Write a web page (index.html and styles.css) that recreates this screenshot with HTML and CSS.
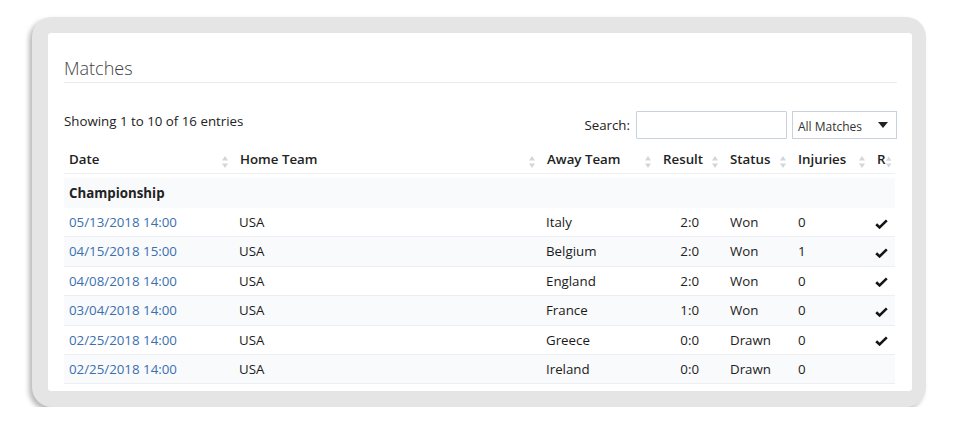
FILE: index.html
```html
<!DOCTYPE html>
<html lang="en">
<head>
<meta charset="utf-8">
<title>Matches</title>
<link rel="stylesheet" href="styles.css">
</head>
<body>
<div class="frame">
  <div class="panel">
    <h2 class="title">Matches</h2>
    <div class="toolbar">
      <div class="info">Showing 1 to 10 of 16 entries</div>
      <div class="filters">
        <label class="search-label" for="q">Search:</label>
        <input id="q" class="search-input" type="text">
        <div class="select">
          <span>All Matches</span>
          <svg class="caret" width="10" height="6" viewBox="0 0 10 6"><path d="M0 0H10L5 6Z" fill="#222"/></svg>
        </div>
      </div>
    </div>
    <table class="grid">
      <colgroup>
        <col class="c-date"><col class="c-home"><col class="c-away"><col class="c-result"><col class="c-status"><col class="c-inj"><col class="c-r">
      </colgroup>
      <thead>
        <tr>
          <th><div class="th"><span>Date</span><svg class="sort" width="6" height="12" viewBox="0 0 6 12"><path d="M3 0L6 4.5H0Z M3 12L6 7.5H0Z" fill="#d3d6da"/></svg></div></th>
          <th><div class="th"><span>Home Team</span><svg class="sort" width="6" height="12" viewBox="0 0 6 12"><path d="M3 0L6 4.5H0Z M3 12L6 7.5H0Z" fill="#d3d6da"/></svg></div></th>
          <th><div class="th"><span>Away Team</span><svg class="sort" width="6" height="12" viewBox="0 0 6 12"><path d="M3 0L6 4.5H0Z M3 12L6 7.5H0Z" fill="#d3d6da"/></svg></div></th>
          <th><div class="th"><span>Result</span><svg class="sort" width="6" height="12" viewBox="0 0 6 12"><path d="M3 0L6 4.5H0Z M3 12L6 7.5H0Z" fill="#d3d6da"/></svg></div></th>
          <th><div class="th"><span>Status</span><svg class="sort" width="6" height="12" viewBox="0 0 6 12"><path d="M3 0L6 4.5H0Z M3 12L6 7.5H0Z" fill="#d3d6da"/></svg></div></th>
          <th><div class="th"><span>Injuries</span><svg class="sort" width="6" height="12" viewBox="0 0 6 12"><path d="M3 0L6 4.5H0Z M3 12L6 7.5H0Z" fill="#d3d6da"/></svg></div></th>
          <th class="th-r"><div class="th"><span>R</span><svg class="sort" width="6" height="12" viewBox="0 0 6 12"><path d="M3 0L6 4.5H0Z M3 12L6 7.5H0Z" fill="#d3d6da"/></svg></div></th>
        </tr>
      </thead>
      <tbody>
        <tr class="group"><td colspan="7">Championship</td></tr>
        <tr>
          <td><a href="#">05/13/2018 14:00</a></td><td class="team">USA</td><td class="team">Italy</td><td class="result">2:0</td><td>Won</td><td>0</td>
          <td class="check"><svg width="13" height="10" viewBox="0 0 13 10"><path d="M1.2 5.2L4.6 8.4L11.8 1.4" fill="none" stroke="#151515" stroke-width="2.6"/></svg></td>
        </tr>
        <tr>
          <td><a href="#">04/15/2018 15:00</a></td><td class="team">USA</td><td class="team">Belgium</td><td class="result">2:0</td><td>Won</td><td>1</td>
          <td class="check"><svg width="13" height="10" viewBox="0 0 13 10"><path d="M1.2 5.2L4.6 8.4L11.8 1.4" fill="none" stroke="#151515" stroke-width="2.6"/></svg></td>
        </tr>
        <tr>
          <td><a href="#">04/08/2018 14:00</a></td><td class="team">USA</td><td class="team">England</td><td class="result">2:0</td><td>Won</td><td>0</td>
          <td class="check"><svg width="13" height="10" viewBox="0 0 13 10"><path d="M1.2 5.2L4.6 8.4L11.8 1.4" fill="none" stroke="#151515" stroke-width="2.6"/></svg></td>
        </tr>
        <tr>
          <td><a href="#">03/04/2018 14:00</a></td><td class="team">USA</td><td class="team">France</td><td class="result">1:0</td><td>Won</td><td>0</td>
          <td class="check"><svg width="13" height="10" viewBox="0 0 13 10"><path d="M1.2 5.2L4.6 8.4L11.8 1.4" fill="none" stroke="#151515" stroke-width="2.6"/></svg></td>
        </tr>
        <tr>
          <td><a href="#">02/25/2018 14:00</a></td><td class="team">USA</td><td class="team">Greece</td><td class="result">0:0</td><td>Drawn</td><td>0</td>
          <td class="check"><svg width="13" height="10" viewBox="0 0 13 10"><path d="M1.2 5.2L4.6 8.4L11.8 1.4" fill="none" stroke="#151515" stroke-width="2.6"/></svg></td>
        </tr>
        <tr>
          <td><a href="#">02/25/2018 14:00</a></td><td class="team">USA</td><td class="team">Ireland</td><td class="result">0:0</td><td>Drawn</td><td>0</td>
          <td class="check"></td>
        </tr>
      </tbody>
    </table>
  </div>
</div>
</body>
</html>
```
FILE: styles.css
```css
html, body {
  margin: 0;
  padding: 0;
  background: #ffffff;
}
body {
  padding: 17px 0 0 32px;
  font-family: "Open Sans", "Liberation Sans", sans-serif;
  font-size: 13.3px;
  line-height: 18px;
  color: #222;
}
.frame {
  width: 864px;
  padding: 16px 14px 16px 16px;
  background: #e5e5e5;
  border-radius: 20px;
  box-shadow: -3px 3px 5px rgba(0, 0, 0, 0.28);
}
.panel {
  background: #fff;
  border-radius: 3px;
  padding: 23px 15px 7px 16px;
  height: 328px;
}
.title {
  margin: 0;
  font-size: 18px;
  line-height: 24px;
  font-weight: 300;
  color: #3f3f3f;
  padding-bottom: 2px;
  border-bottom: 1px solid #ececec;
}
.toolbar {
  display: flex;
  justify-content: space-between;
  align-items: flex-start;
  margin-top: 28px;
}
.info {
  margin-top: 1px;
  color: #222;
}
.filters {
  display: flex;
  align-items: center;
}
.search-label {
  margin-right: 6px;
  color: #222;
}
.search-input {
  box-sizing: border-box;
  width: 151px;
  height: 28px;
  margin: 0 5px 0 0;
  border: 1px solid #c9d1dd;
  border-radius: 1px;
  padding: 0 6px;
  font: inherit;
}
.select {
  box-sizing: border-box;
  width: 105px;
  height: 28px;
  border: 1px solid #c9d1dd;
  display: flex;
  align-items: center;
  justify-content: space-between;
  padding: 4px 8px 0 5px;
  font-size: 12px;
  color: #333;
}
.caret {
  display: block;
  margin-top: -4px;
}
.grid {
  width: 831px;
  table-layout: fixed;
  border-collapse: separate;
  border-spacing: 0;
  margin-top: 1px;
}
.c-date { width: 171px; }
.c-home { width: 307px; }
.c-away { width: 116px; }
.c-result { width: 67px; }
.c-status { width: 68px; }
.c-inj { width: 79px; }
.c-r { width: 23px; }
.grid th {
  padding: 10px 7px 5px 5px;
  text-align: left;
  font-weight: 600;
  color: #222;
  border-bottom: 1px solid #eef0f2;
  white-space: nowrap;
}
.grid th.th-r {
  padding-right: 4px;
}
.th {
  display: flex;
  justify-content: space-between;
  align-items: center;
}
.sort {
  display: block;
  margin-top: 6px;
}
.grid td {
  padding: 5px 5px 5.4px;
  border-bottom: 1px solid #eceef1;
  white-space: nowrap;
}
.grid tbody tr:nth-child(odd) td {
  background: #f9fafc;
}
.grid tr.group td {
  background: #e8e4df;
  font-weight: 700;
  color: #222;
  border-top: 4px solid #fff;
  border-bottom: none;
  padding: 6px 5px;
}
.grid a {
  color: #3a6fb0;
  text-decoration: none;
}
.grid td.team {
  padding-left: 4px;
  color: #1a1a1a;
}
.grid td.result {
  text-align: right;
  padding-right: 26px;
}
.grid td.check {
  padding: 5px 0 5.4px 3px;
}
.check svg {
  display: block;
  margin-top: 3px;
}
```
